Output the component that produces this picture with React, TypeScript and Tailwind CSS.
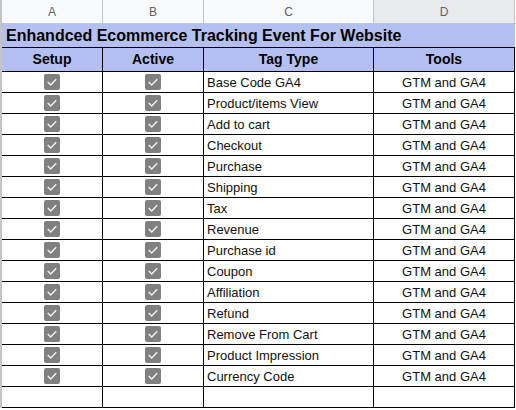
import React from "react";

const rows = [
  "Base Code GA4",
  "Product/items View",
  "Add to cart",
  "Checkout",
  "Purchase",
  "Shipping",
  "Tax",
  "Revenue",
  "Purchase id",
  "Coupon",
  "Affiliation",
  "Refund",
  "Remove From Cart",
  "Product Impression",
  "Currency Code",
];

function Check() {
  return (
    <div className="w-[16px] h-[16px] rounded-[2px] bg-[#808080] flex items-center justify-center">
      <svg width="16" height="16" viewBox="0 0 16 16">
        <path d="M3.8 8.1 L6.7 10.9 L12.2 5.3" fill="none" stroke="#f2f2f2" strokeWidth="1.4" />
      </svg>
    </div>
  );
}

export default function App() {
  return (
    <div
      className="w-[516px] h-[410px] bg-white overflow-hidden text-[#000]"
      style={{ fontFamily: '"Liberation Sans", Arial, sans-serif' }}
    >
      <div className="flex flex-col border-l-2 border-[#c4c4c4] w-[516px]">
        {/* column letters */}
        <div className="flex h-[24px] border-b border-[#c4c4c4] text-[12px] text-[#5f6368]">
          <div className="w-[101px] bg-[#f8f9fa] border-r border-[#c4c4c4] flex items-center justify-center">A</div>
          <div className="w-[101px] bg-[#f8f9fa] border-r border-[#c4c4c4] flex items-center justify-center">B</div>
          <div className="w-[170px] bg-[#f8f9fa] border-r border-[#c4c4c4] flex items-center justify-center">C</div>
          <div className="w-[141px] bg-[#e8eaed] border-r border-[#c4c4c4] flex items-center justify-center">D</div>
          <div className="flex-1 bg-white" />
        </div>
        {/* title */}
        <div className="flex h-[24px]">
          <div className="w-[513px] bg-[#b4c0f1] border-b border-black flex items-center pl-[4px] text-[16px] font-bold">
            Enhandced Ecommerce Tracking Event For Website
          </div>
          <div className="flex-1" />
        </div>
        {/* header */}
        <div className="flex h-[24px] text-[14px] font-bold">
          <div className="w-[101px] bg-[#b4c0f1] border-r border-b border-black flex items-center justify-center">Setup</div>
          <div className="w-[101px] bg-[#b4c0f1] border-r border-b border-black flex items-center justify-center">Active</div>
          <div className="w-[170px] bg-[#b4c0f1] border-r border-b border-black flex items-center justify-center">Tag Type</div>
          <div className="w-[141px] bg-[#b4c0f1] border-r border-b border-black flex items-center justify-center">Tools</div>
          <div className="flex-1" />
        </div>
        {rows.map((r) => (
          <div key={r} className="flex h-[21px] text-[13px] text-[#111]">
            <div className="w-[101px] border-r border-b border-black flex items-center justify-center">
              <Check />
            </div>
            <div className="w-[101px] border-r border-b border-black flex items-center justify-center">
              <Check />
            </div>
            <div className="w-[170px] border-r border-b border-black flex items-center pl-[3px] pt-[1px]">{r}</div>
            <div className="w-[141px] border-r border-b border-black flex items-center justify-center pt-[1px]">GTM and GA4</div>
            <div className="flex-1" />
          </div>
        ))}
        <div className="flex h-[21px]">
          <div className="w-[101px] border-r border-b border-black" />
          <div className="w-[101px] border-r border-b border-black" />
          <div className="w-[170px] border-r border-b border-black" />
          <div className="w-[141px] border-r border-b border-black" />
          <div className="flex-1" />
        </div>
      </div>
    </div>
  );
}
